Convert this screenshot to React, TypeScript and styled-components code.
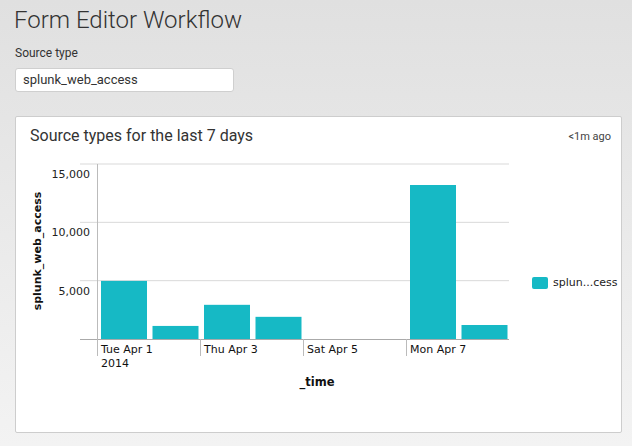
import React from "react";
import styled, { createGlobalStyle } from "styled-components";

const GlobalStyle = createGlobalStyle`
  html, body {
    margin: 0;
    padding: 0;
  }
  body {
    min-height: 446px;
    background: linear-gradient(180deg, #e0e0e0 0%, #f3f3f3 100%);
    font-family: Roboto, "Open Sans", sans-serif;
    color: #333;
  }
`;

const BAR_COLOR = "#16b9c5";
const CHART_FONT = '"DejaVu Sans", Verdana, sans-serif';

const data = [
  { day: "Tue Apr 1", value: 4980 },
  { day: "Wed Apr 2", value: 1120 },
  { day: "Thu Apr 3", value: 2930 },
  { day: "Fri Apr 4", value: 1900 },
  { day: "Sat Apr 5", value: 0 },
  { day: "Sun Apr 6", value: 0 },
  { day: "Mon Apr 7", value: 13200 },
  { day: "Tue Apr 8", value: 1200 },
];

// plot geometry, in svg coordinates
const X0 = 81;
const SLOT = 51.5;
const Y_BASE = 189;
const PER_5K = 58.33;
const scaleY = (v: number) => (v / 5000) * PER_5K;

const Page = styled.div`
  padding: 5px 10px 0 15px;
`;

const Title = styled.h1`
  margin: 0 0 0 -1px;
  font-size: 24px;
  line-height: 30px;
  font-weight: 300;
  color: #333;
`;

const FieldLabel = styled.label`
  display: block;
  margin-top: 10px;
  font-size: 12px;
  line-height: 16px;
  color: #333;
`;

const TextInput = styled.div`
  box-sizing: border-box;
  margin-top: 7px;
  width: 219px;
  height: 24px;
  padding: 0 7px;
  background: #fff;
  border: 1px solid #cfcfcf;
  border-radius: 3px;
  font-size: 13px;
  line-height: 22px;
  color: #333;
`;

const Panel = styled.section`
  box-sizing: border-box;
  margin-top: 24px;
  width: 607px;
  height: 317px;
  background: #fff;
  border: 1px solid #cdcdcd;
  border-radius: 2px;
`;

const PanelHeader = styled.div`
  display: flex;
  align-items: center;
  justify-content: space-between;
  padding: 9px 10px 4px 14px;
`;

const PanelTitle = styled.h2`
  margin: 0;
  font-size: 16px;
  line-height: 20px;
  font-weight: 400;
  color: #333;
`;

const Refreshed = styled.span`
  font-size: 11px;
  color: #444;
`;

const ChartBody = styled.div`
  display: flex;
  align-items: flex-start;
`;

const Legend = styled.div`
  display: flex;
  align-items: center;
  gap: 5px;
  margin: 126px 0 0 16px;
  font-family: ${CHART_FONT};
  font-size: 11px;
  color: #222;
`;

const Swatch = styled.span`
  width: 16px;
  height: 12px;
  border-radius: 2px;
  background: ${BAR_COLOR};
`;

const Chart = () => {
  const grid = [0, 5000, 10000, 15000];
  return (
    <svg width={500} height={260} fontFamily={CHART_FONT}>
      {grid.slice(1).map((g) => (
        <line
          key={g}
          x1={64}
          x2={493}
          y1={Y_BASE - scaleY(g)}
          y2={Y_BASE - scaleY(g)}
          stroke="#d9d9d9"
        />
      ))}
      {grid.slice(1).map((g) => (
        <text
          key={g}
          x={74}
          y={Y_BASE - scaleY(g) + 14}
          textAnchor="end"
          fontSize={11}
          fill="#222"
        >
          {g.toLocaleString("en-US")}
        </text>
      ))}
      {data.map((d, i) => {
        const h = scaleY(d.value);
        return (
          <rect
            key={d.day}
            x={X0 + i * SLOT + 4}
            y={Y_BASE - h}
            width={46}
            height={h}
            fill={BAR_COLOR}
          />
        );
      })}
      <line x1={X0 + 0.5} x2={X0 + 0.5} y1={14} y2={189} stroke="#bbb" />
      <line x1={64} x2={493} y1={Y_BASE + 0.5} y2={Y_BASE + 0.5} stroke="#aaa" />
      {[0, 2, 4, 6].map((i) => (
        <g key={i}>
          <line
            x1={Math.round(X0 + i * SLOT) + 0.5}
            x2={Math.round(X0 + i * SLOT) + 0.5}
            y1={Y_BASE}
            y2={206}
            stroke="#bbb"
          />
          <text x={X0 + i * SLOT + 4} y={203} fontSize={11} fill="#111">
            {data[i].day}
          </text>
        </g>
      ))}
      <text x={85} y={217} fontSize={11} fill="#111">
        2014
      </text>
      <text
        x={301}
        y={236}
        textAnchor="middle"
        fontSize={11.5}
        fontWeight="bold"
        fill="#111"
      >
        _time
      </text>
      <text
        x={0}
        y={0}
        transform="translate(25 101) rotate(-90)"
        textAnchor="middle"
        fontSize={11}
        fontWeight="bold"
        fill="#111"
      >
        splunk_web_access
      </text>
    </svg>
  );
};

export default function App() {
  return (
    <>
      <GlobalStyle />
      <Page>
        <Title>Form Editor Workflow</Title>
        <FieldLabel>Source type</FieldLabel>
        <TextInput>splunk_web_access</TextInput>
        <Panel>
          <PanelHeader>
            <PanelTitle>Source types for the last 7 days</PanelTitle>
            <Refreshed>&lt;1m ago</Refreshed>
          </PanelHeader>
          <ChartBody>
            <Chart />
            <Legend>
              <Swatch />
              splun...cess
            </Legend>
          </ChartBody>
        </Panel>
      </Page>
    </>
  );
}
